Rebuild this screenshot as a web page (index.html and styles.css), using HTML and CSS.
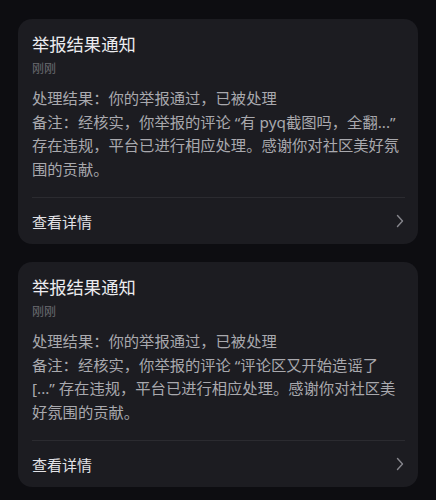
FILE: index.html
```html
<!DOCTYPE html>
<html lang="zh-CN">
<head>
  <meta charset="UTF-8" />
  <title>消息通知</title>
  <link rel="stylesheet" href="styles.css">
</head>
<body>
  <div class="notice-list">
    <div class="notice-card">
      <div class="notice-title">举报结果通知</div>
      <div class="notice-time">刚刚</div>
      <div class="notice-body">
        处理结果：你的举报通过，已被处理<br>
        备注：经核实，你举报的评论 “有 pyq截图吗，全翻...” 存在违规，平台已进行相应处理。感谢你对社区美好氛围的贡献。
      </div>
      <a class="notice-link" href="#">
        <span>查看详情</span>
        <svg class="chevron" width="8" height="14" viewBox="0 0 8 14"><path d="M1.5 1.5 L6.5 7 L1.5 12.5" fill="none" stroke="currentColor" stroke-width="1.4" stroke-linecap="round" stroke-linejoin="round"/></svg>
      </a>
    </div>

    <div class="notice-card">
      <div class="notice-title">举报结果通知</div>
      <div class="notice-time">刚刚</div>
      <div class="notice-body">
        处理结果：你的举报通过，已被处理<br>
        备注：经核实，你举报的评论 “评论区又开始造谣了<br>[...” 存在违规，平台已进行相应处理。感谢你对社区美好氛围的贡献。
      </div>
      <a class="notice-link" href="#">
        <span>查看详情</span>
        <svg class="chevron" width="8" height="14" viewBox="0 0 8 14"><path d="M1.5 1.5 L6.5 7 L1.5 12.5" fill="none" stroke="currentColor" stroke-width="1.4" stroke-linecap="round" stroke-linejoin="round"/></svg>
      </a>
    </div>
  </div>
</body>
</html>
```

FILE: styles.css
```css
body {
  margin: 0;
  background-color: #0d0d11;
  font-family: "Noto Sans", "Noto Sans CJK SC", sans-serif;
}
.notice-list {
  display: flex;
  flex-direction: column;
  gap: 18px;
  padding: 19px 18px;
}
.notice-card {
  background-color: #1c1c21;
  border-radius: 14px;
  padding: 14px 13px 0 14px;
}
.notice-title {
  font-size: 17.3px;
  line-height: 24px;
  color: #ececf0;
}
.notice-time {
  margin-top: 2px;
  font-size: 12px;
  line-height: 20px;
  color: #6c6c72;
}
.notice-body {
  margin-top: 8px;
  font-size: 15.3px;
  line-height: 23.5px;
  color: #a9a9ae;
  padding-bottom: 16px;
  border-bottom: 1px solid #2b2b30;
}
.notice-link {
  display: flex;
  align-items: center;
  justify-content: space-between;
  height: 46px;
  font-size: 15px;
  color: #e2e2e6;
  text-decoration: none;
}
.chevron {
  color: #86868c;
  margin-right: 1px;
}
```
